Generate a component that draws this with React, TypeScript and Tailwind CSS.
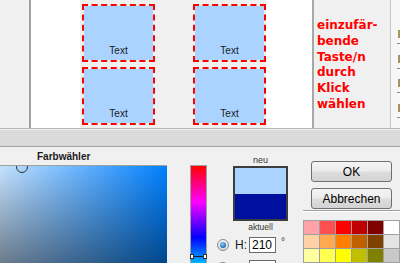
const swatches = [
  ['#ffa3a8', '#ff5050', '#ff0000', '#c00000', '#800000', '#ffffff'],
  ['#ffd1a4', '#ffaa50', '#ff8000', '#c06000', '#804000', '#e4e4e4'],
  ['#ffffa0', '#ffff50', '#ffff00', '#c0c000', '#808000', '#c8c8c8'],
]

function Cell() {
  return (
    <div className="flex h-[58px] w-[73px] items-end justify-center border-2 border-dashed border-[#ff0000] bg-[#aad4ff] bg-clip-padding pb-[4px] text-[10px] leading-[10px] text-[#1a1a1a]">
      Text
    </div>
  )
}

function Radio({ checked }: { checked?: boolean }) {
  return (
    <span className="flex h-[12px] w-[12px] items-center justify-center rounded-full border border-[#8a8a8a] bg-[linear-gradient(to_bottom,#f4f4f4,#d6d6d6)]">
      {checked && (
        <span className="h-[6px] w-[6px] rounded-full bg-[radial-gradient(circle_at_40%_35%,#8fd0ff,#1b6cb8_70%)]" />
      )}
    </span>
  )
}

function Button({ label }: { label: string }) {
  return (
    <button className="flex h-[21px] w-[81px] items-center justify-center rounded-[3px] border border-[#707070] bg-[linear-gradient(to_bottom,#f4f4f4_0%,#ececec_48%,#dedede_52%,#d2d2d2_100%)] text-[12px] leading-none text-black">
      {label}
    </button>
  )
}

function App() {
  return (
    <div className="h-[263px] w-[400px] overflow-hidden bg-[#f0f0f0] font-['Liberation_Sans',Arial,sans-serif]">
      {/* Formular mit den Tasten */}
      <div className="flex h-[129px] border-b border-[#b4b4b4]">
        <div className="w-[29px]" />
        <div className="w-[51px] border-l-2 border-[#a0a0a0] bg-white" />
        <div className="w-[186px] pl-[2px] pt-[4px]">
          <div className="grid grid-cols-[73px_73px] gap-x-[38px] gap-y-[5px]">
            <Cell />
            <Cell />
            <Cell />
            <Cell />
          </div>
        </div>
        <div className="w-[46px] bg-white" />
        <div className="w-[78px] border-l-2 border-[#a8a8a8] pl-[3px] pt-[18px] font-['DejaVu_Sans',Verdana,sans-serif] text-[12px] font-bold leading-[15.8px] text-[#ff0000]">
          einzufär-
          <br />
          bende
          <br />
          Taste/n
          <br />
          durch
          <br />
          Klick
          <br />
          wählen
        </div>
        <div className="flex flex-1 flex-col items-end border-l border-[#c8c8c8] bg-[#f7f7f7] pt-[30px]">
          {[0, 1, 2, 3].map((i) => (
            <div key={i} className="flex h-[30px] flex-col items-end">
              <div className="h-[8px] w-[2px] bg-[#a89060]" />
              <div className="mt-[5px] h-px w-[3px] bg-[#909090]" />
            </div>
          ))}
        </div>
      </div>
      <div className="mt-[1px] h-[17px] border-b border-[#a0a0a0] bg-[#dadada]" />

      {/* Farbwähler */}
      <div className="flex">
        <div className="flex w-[167px] flex-col">
          <div className="h-[18px] pl-[37px] pt-[4px] text-[10px] font-bold leading-[12px] text-[#1a1a1a]">Farbwähler</div>
          <div className="h-[217px] w-[167px] overflow-hidden border-t border-[#a0a0a0]">
            <div className="relative ml-[-49px] h-[216px] w-[216px] bg-[linear-gradient(to_top,#000000,transparent),linear-gradient(to_right,#ffffff,#0080ff)]">
              <div className="absolute left-[65px] top-[-5px] h-[12px] w-[12px] rounded-full border border-[#333]" />
            </div>
          </div>
        </div>

        <div className="ml-[23px] mt-[18px]">
          <div className="relative h-[217px] w-[17px] border border-[#a0a0a0] bg-[linear-gradient(to_bottom,#ff0000_0%,#ff00ff_16.67%,#0000ff_33.33%,#00ffff_50%,#00ff00_66.67%,#ffff00_83.33%,#ff0000_100%)]">
            <div className="absolute left-[1px] right-[1px] top-[90px] h-px bg-[#1a1a3a]" />
            <div className="absolute left-[-1px] top-[88px] h-[5px] w-[4px] border border-[#333] bg-white" />
            <div className="absolute right-[-1px] top-[88px] h-[5px] w-[4px] border border-[#333] bg-white" />
          </div>
        </div>

        <div className="ml-[7px] flex w-[93px] flex-col pt-[8px]">
          <div className="ml-[19px] w-[55px] text-center text-[9px] leading-[11px] text-[#333]">neu</div>
          <div className="ml-[19px] flex h-[55px] w-[55px] flex-col border-2 border-[#3c3c3c]">
            <div className="flex-1 bg-[#aad4ff]" />
            <div className="flex-1 bg-[#00109e]" />
          </div>
          <div className="ml-[19px] w-[55px] text-center text-[8.5px] leading-[12px] text-[#333]">aktuell</div>
          <div className="mt-[4px] flex h-[16px] items-center pl-[3px]">
            <Radio checked />
            <span className="ml-[6px] w-[14px] text-[12px] leading-none text-[#1a1a1a]">H:</span>
            <div className="flex h-[16px] w-[27px] items-center border border-[#6a6a6a] bg-white pl-[2px] text-[12px] leading-none text-black">210</div>
            <span className="ml-[5px] self-start text-[10px] leading-[10px] text-[#333]">°</span>
          </div>
          <div className="mt-[7px] flex h-[16px] items-center pl-[3px]">
            <Radio />
            <span className="ml-[6px] w-[14px] text-[12px] leading-none text-[#1a1a1a]">S:</span>
            <div className="flex h-[16px] w-[27px] items-center border border-[#6a6a6a] bg-white pl-[2px] text-[12px] leading-none text-black">33</div>
            <span className="ml-[4px] text-[10px] leading-none text-[#333]">%</span>
          </div>
        </div>

        <div className="flex flex-1 flex-col pt-[14px]">
          <div className="ml-[8px]">
            <Button label="OK" />
          </div>
          <div className="ml-[8px] mt-[6px]">
            <Button label="Abbrechen" />
          </div>
          <div className="mt-[1px] h-[2px] border-t border-[#a0a0a0] bg-white" />
          <div className="mt-[8px] grid w-max grid-cols-[repeat(6,15px)] gap-px border border-[#a0a0a0] bg-[#a0a0a0]">
            {swatches.flat().map((c, i) => (
              <div key={i} className="h-[13px]" style={{ backgroundColor: c }} />
            ))}
          </div>
        </div>
      </div>
    </div>
  )
}

export default App
